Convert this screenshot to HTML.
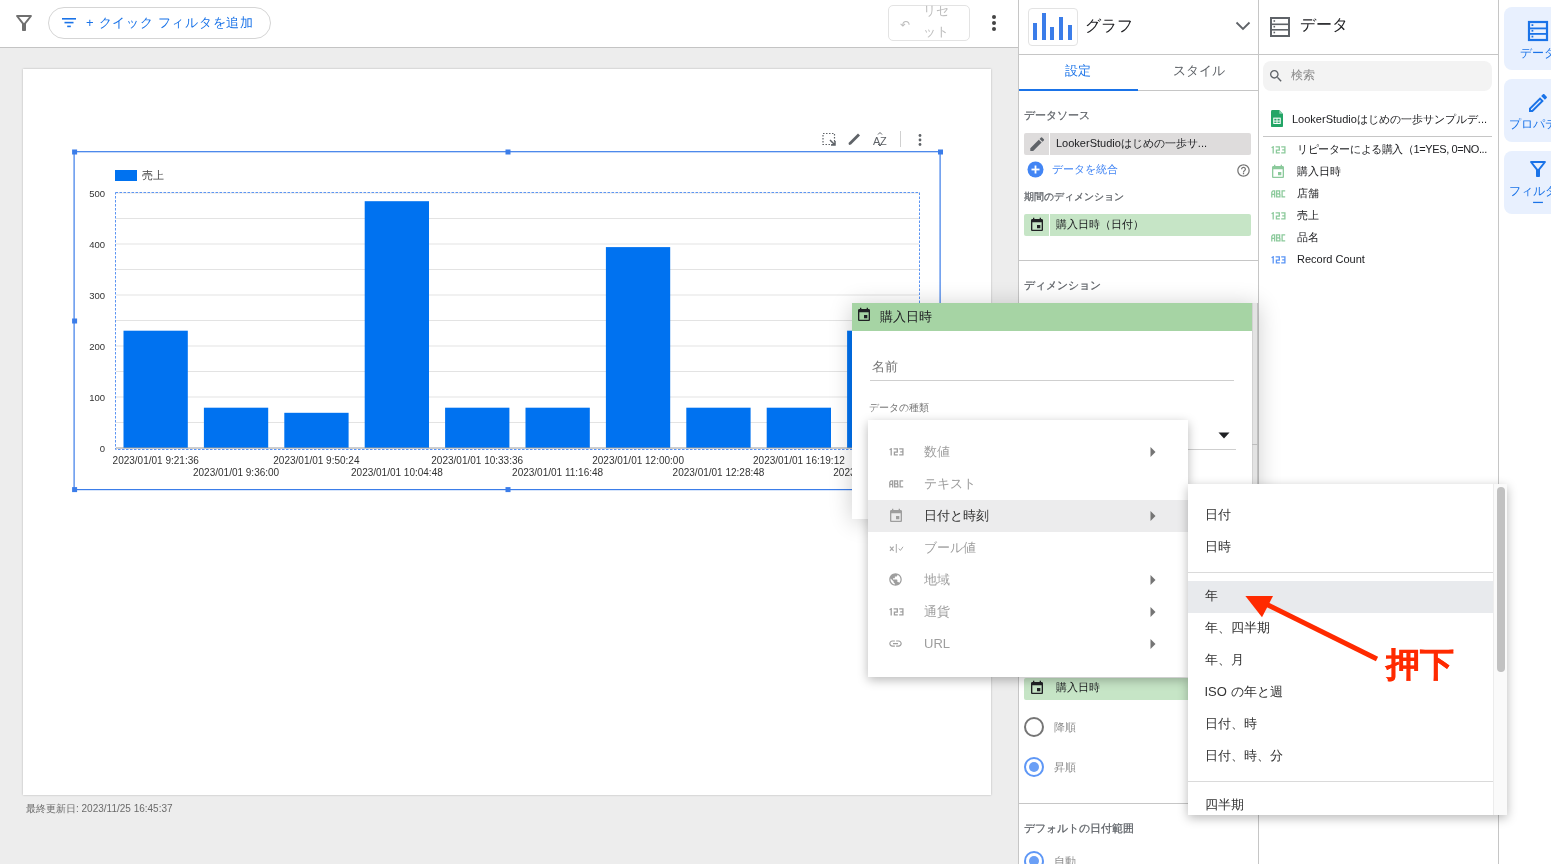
<!DOCTYPE html>
<html><head><meta charset="utf-8">
<style>
*{box-sizing:border-box;margin:0;padding:0}
html,body{width:1551px;height:864px;overflow:hidden;background:#fff;font-family:"Liberation Sans",sans-serif;color:#202124}
.a{position:absolute}
.t{position:absolute;white-space:nowrap;line-height:1}
</style></head><body><div style="position:absolute;left:0;top:0;width:1551px;height:864px;overflow:hidden;will-change:transform">
<div class="a" style="left:0px;top:0px;width:1018px;height:48px;background:#fff;border-bottom:1px solid #c4c4c4"></div>
<div class="a" style="left:0px;top:48px;width:1018px;height:816px;background:#ededed;"></div>
<svg class="a" style="left:12px;top:11px" width="24" height="24" viewBox="0 0 24 24"><path fill="#6f6f6f" d="M7,6h10l-5.01,6.3L7,6z M4.25,5.61C6.27,8.2,10,13,10,13v6c0,0.55,0.45,1,1,1h2c0.55,0,1-0.45,1-1v-6c0,0,3.72-4.8,5.74-7.39C20.25,4.95,19.78,4,18.95,4H5.04C4.21,4,3.74,4.95,4.25,5.61z"/></svg>
<div class="a" style="left:48px;top:7px;width:223px;height:32px;background:transparent;border:1px solid #d5d5d5;border-radius:16px"></div>
<svg class="a" style="left:62px;top:18px" width="14" height="10" viewBox="0 0 14 10"><rect x="0" y="0" width="14" height="1.6" fill="#1a73e8"/><rect x="2.5" y="3.8" width="9" height="1.6" fill="#1a73e8"/><rect x="5.2" y="7.6" width="3.6" height="1.6" fill="#1a73e8"/></svg>
<div class="t" style="left:86px;top:16px;font-size:13px;color:#1a73e8;letter-spacing:0.7px">+ クイック フィルタを追加</div>
<div class="a" style="left:888px;top:5px;width:82px;height:36px;background:transparent;border:1px solid #e3e3e3;border-radius:5px"></div>
<div class="t" style="left:900px;top:19px;font-size:12px;color:#bdbdbd;">&#x21B6;</div>
<div class="t" style="left:922.5px;top:0px;font-size:13px;color:#bdbdbd;line-height:21px;white-space:normal;width:28px">リセ ット</div>
<div class="a" style="left:992px;top:15px;width:4px;height:4px;background:#444;border-radius:2px"></div>
<div class="a" style="left:992px;top:21px;width:4px;height:4px;background:#444;border-radius:2px"></div>
<div class="a" style="left:992px;top:27px;width:4px;height:4px;background:#444;border-radius:2px"></div>
<div class="a" style="left:23px;top:69px;width:968px;height:726px;background:#fff;box-shadow:0 0 2px rgba(0,0,0,.25)"></div>
<svg class="a" style="left:0;top:0" width="1018" height="864" viewBox="0 0 1018 864">
<line x1="116" x2="919" y1="422.5" y2="422.5" stroke="#e3e3e3" stroke-width="1"/>
<line x1="116" x2="919" y1="397.0" y2="397.0" stroke="#e3e3e3" stroke-width="1"/>
<line x1="116" x2="919" y1="371.5" y2="371.5" stroke="#e3e3e3" stroke-width="1"/>
<line x1="116" x2="919" y1="346.0" y2="346.0" stroke="#e3e3e3" stroke-width="1"/>
<line x1="116" x2="919" y1="320.5" y2="320.5" stroke="#e3e3e3" stroke-width="1"/>
<line x1="116" x2="919" y1="295.0" y2="295.0" stroke="#e3e3e3" stroke-width="1"/>
<line x1="116" x2="919" y1="269.5" y2="269.5" stroke="#e3e3e3" stroke-width="1"/>
<line x1="116" x2="919" y1="244.0" y2="244.0" stroke="#e3e3e3" stroke-width="1"/>
<line x1="116" x2="919" y1="218.5" y2="218.5" stroke="#e3e3e3" stroke-width="1"/>
<line x1="116" x2="919" y1="193.0" y2="193.0" stroke="#e3e3e3" stroke-width="1"/>
<rect x="123.5" y="330.7" width="64.3" height="117.3" fill="#0072f0"/>
<rect x="203.9" y="407.7" width="64.3" height="40.3" fill="#0072f0"/>
<rect x="284.3" y="412.8" width="64.3" height="35.2" fill="#0072f0"/>
<rect x="364.7" y="201.2" width="64.3" height="246.8" fill="#0072f0"/>
<rect x="445.1" y="407.7" width="64.3" height="40.3" fill="#0072f0"/>
<rect x="525.5" y="407.7" width="64.3" height="40.3" fill="#0072f0"/>
<rect x="605.9" y="247.1" width="64.3" height="200.9" fill="#0072f0"/>
<rect x="686.3" y="407.7" width="64.3" height="40.3" fill="#0072f0"/>
<rect x="766.7" y="407.7" width="64.3" height="40.3" fill="#0072f0"/>
<rect x="847.1" y="330.7" width="64.3" height="117.3" fill="#0072f0"/>
<line x1="116" x2="919" y1="448.0" y2="448.0" stroke="#9a9a9a" stroke-width="1"/>
<rect x="115.5" y="192.5" width="804" height="257" fill="none" stroke="#5c95f2" stroke-width="1" stroke-dasharray="2.5,1.5"/>
<text x="105" y="451.5" text-anchor="end" font-size="9.5" fill="#333" font-family="Liberation Sans">0</text>
<text x="105" y="400.5" text-anchor="end" font-size="9.5" fill="#333" font-family="Liberation Sans">100</text>
<text x="105" y="349.5" text-anchor="end" font-size="9.5" fill="#333" font-family="Liberation Sans">200</text>
<text x="105" y="298.5" text-anchor="end" font-size="9.5" fill="#333" font-family="Liberation Sans">300</text>
<text x="105" y="247.5" text-anchor="end" font-size="9.5" fill="#333" font-family="Liberation Sans">400</text>
<text x="105" y="196.5" text-anchor="end" font-size="9.5" fill="#333" font-family="Liberation Sans">500</text>
<text x="155.7" y="464" text-anchor="middle" font-size="10" fill="#333" font-family="Liberation Sans">2023/01/01 9:21:36</text>
<text x="236.1" y="475.5" text-anchor="middle" font-size="10" fill="#333" font-family="Liberation Sans">2023/01/01 9:36:00</text>
<text x="316.4" y="464" text-anchor="middle" font-size="10" fill="#333" font-family="Liberation Sans">2023/01/01 9:50:24</text>
<text x="396.9" y="475.5" text-anchor="middle" font-size="10" fill="#333" font-family="Liberation Sans">2023/01/01 10:04:48</text>
<text x="477.2" y="464" text-anchor="middle" font-size="10" fill="#333" font-family="Liberation Sans">2023/01/01 10:33:36</text>
<text x="557.6" y="475.5" text-anchor="middle" font-size="10" fill="#333" font-family="Liberation Sans">2023/01/01 11:16:48</text>
<text x="638.1" y="464" text-anchor="middle" font-size="10" fill="#333" font-family="Liberation Sans">2023/01/01 12:00:00</text>
<text x="718.5" y="475.5" text-anchor="middle" font-size="10" fill="#333" font-family="Liberation Sans">2023/01/01 12:28:48</text>
<text x="798.9" y="464" text-anchor="middle" font-size="10" fill="#333" font-family="Liberation Sans">2023/01/01 16:19:12</text>
<text x="879.2" y="475.5" text-anchor="middle" font-size="10" fill="#333" font-family="Liberation Sans">2023/01/01 16:48:00</text>
<rect x="115" y="170" width="22" height="11" fill="#0072f0"/>
<text x="142" y="179" font-size="11" fill="#444" font-family="Liberation Sans">売上</text>
<rect x="74.1" y="151.7" width="866" height="337.9" fill="none" stroke="#3b7de9" stroke-width="1.2"/>
<rect x="72.1" y="149.5" width="5" height="5" fill="#3b7de9"/>
<rect x="505.5" y="149.5" width="5" height="5" fill="#3b7de9"/>
<rect x="938.0" y="149.5" width="5" height="5" fill="#3b7de9"/>
<rect x="72.1" y="318.5" width="5" height="5" fill="#3b7de9"/>
<rect x="938.0" y="318.5" width="5" height="5" fill="#3b7de9"/>
<rect x="72.1" y="487.1" width="5" height="5" fill="#3b7de9"/>
<rect x="505.5" y="487.1" width="5" height="5" fill="#3b7de9"/>
<rect x="938.0" y="487.1" width="5" height="5" fill="#3b7de9"/>
<g fill="none" stroke="#5f6368" stroke-width="1.2" stroke-dasharray="1.5,1.5"><rect x="823" y="133.5" width="11.5" height="11"/></g>
<path d="M830 140 l5 5 m-4 0 h4 v-4" fill="none" stroke="#5f6368" stroke-width="1.5"/>
<path d="M848.5 143 L849 145 L851 144.5 L860 135.5 L858 133.5 Z" fill="#5f6368"/>
<text x="873" y="145" font-size="11" fill="#5f6368" font-family="Liberation Sans">A</text><text x="880" y="145" font-size="11" fill="#5f6368" font-family="Liberation Sans">Z</text>
<path d="M878 134.5 l2-2 l2 2 M878 144 l2 2 l2-2" fill="none" stroke="#5f6368" stroke-width="1"/>
<line x1="900.5" x2="900.5" y1="131" y2="147" stroke="#d0d0d0" stroke-width="1"/>
<circle cx="920" cy="135.5" r="1.4" fill="#5f6368"/><circle cx="920" cy="140" r="1.4" fill="#5f6368"/><circle cx="920" cy="144.5" r="1.4" fill="#5f6368"/>
</svg>
<div class="t" style="left:26px;top:804px;font-size:10px;color:#6b6b6b;">最終更新日: 2023/11/25 16:45:37</div>
<div class="a" style="left:1018px;top:0px;width:241px;height:864px;background:#fff;border-left:1px solid #c6c6c6;border-right:1px solid #c6c6c6"></div>
<div class="a" style="left:1259px;top:0px;width:240px;height:864px;background:#fff;border-right:1px solid #c6c6c6"></div>
<div class="a" style="left:1028px;top:8px;width:50px;height:38px;background:transparent;border:1px solid #e3e3e3;border-radius:4px"></div>
<div class="a" style="left:1033.1px;top:22.5px;width:3.8px;height:17.8px;background:#3b7de9;"></div>
<div class="a" style="left:1042px;top:13.4px;width:3.8px;height:26.9px;background:#3b7de9;"></div>
<div class="a" style="left:1050.4px;top:26.9px;width:3.8px;height:13.4px;background:#3b7de9;"></div>
<div class="a" style="left:1059.4px;top:16.6px;width:3.8px;height:23.7px;background:#3b7de9;"></div>
<div class="a" style="left:1068.4px;top:25.3px;width:3.8px;height:15.0px;background:#3b7de9;"></div>
<div class="t" style="left:1085px;top:18px;font-size:16px;color:#202124;">グラフ</div>
<svg class="a" style="left:1234px;top:17px" width="18" height="18" viewBox="0 0 18 18"><path d="M2.5 5.5 L9 12 L15.5 5.5" fill="none" stroke="#5f6368" stroke-width="1.8"/></svg>
<div class="a" style="left:1019px;top:54px;width:239px;height:1px;background:#c6c6c6;"></div>
<div class="t" style="left:1065px;top:64px;font-size:13px;color:#1a73e8;">設定</div>
<div class="t" style="left:1173px;top:64px;font-size:13px;color:#5f6368;">スタイル</div>
<div class="a" style="left:1019px;top:90px;width:239px;height:1px;background:#c6c6c6;"></div>
<div class="a" style="left:1019px;top:89px;width:119px;height:2px;background:#1a73e8;"></div>
<div class="t" style="left:1024px;top:110px;font-size:11px;color:#5f6368;-webkit-text-stroke:0.25px #5f6368">データソース</div>
<div class="a" style="left:1024px;top:133px;width:227px;height:22px;background:#dedcdc;border-radius:2px"></div>
<div class="a" style="left:1049px;top:133px;width:1.2px;height:22px;background:#fff;"></div>
<svg class="a" style="left:1027.7px;top:134.6px" width="18.4" height="18.4" viewBox="0 0 24 24"><path fill="#5f6368" d="M3 17.25V21h3.75L17.81 9.94l-3.75-3.75L3 17.25zM20.71 7.04c.39-.39.39-1.02 0-1.41l-2.34-2.34a.9959.9959 0 0 0-1.41 0l-1.83 1.83 3.75 3.75 1.83-1.83z"/></svg>
<div class="t" style="left:1056px;top:138px;font-size:11px;color:#202124;">LookerStudioはじめの一歩サ...</div>
<svg class="a" style="left:1027px;top:161px" width="17" height="17" viewBox="0 0 17 17"><circle cx="8.5" cy="8.5" r="8" fill="#4285f4"/><rect x="4.5" y="7.6" width="8" height="1.8" fill="#fff"/><rect x="7.6" y="4.5" width="1.8" height="8" fill="#fff"/></svg>
<div class="t" style="left:1052px;top:164px;font-size:11px;color:#4285f4;">データを統合</div>
<svg class="a" style="left:1236px;top:163px" width="15" height="15" viewBox="0 0 24 24"><path fill="#757575" d="M11 18h2v-2h-2v2zm1-16C6.48 2 2 6.48 2 12s4.48 10 10 10 10-4.48 10-10S17.52 2 12 2zm0 18c-4.41 0-8-3.59-8-8s3.59-8 8-8 8 3.59 8 8-3.59 8-8 8zm0-14c-2.21 0-4 1.790-4 4h2c0-1.1.9-2 2-2s2 .9 2 2c0 2-3 1.75-3 5h2c0-2.25 3-2.5 3-5 0-2.21-1.79-4-4-4z"/></svg>
<div class="t" style="left:1024px;top:192px;font-size:10px;color:#5f6368;-webkit-text-stroke:0.25px #5f6368">期間のディメンション</div>
<div class="a" style="left:1024px;top:214px;width:227px;height:22px;background:#c6e5c6;border-radius:2px"></div>
<div class="a" style="left:1049px;top:214px;width:1.2px;height:22px;background:#fff;"></div>
<svg class="a" style="left:1029px;top:217px" width="16" height="16" viewBox="0 0 24 24"><path fill="#202124" d="M17 12h-5v5h5v-5zM16 1v2H8V1H6v2H5c-1.11 0-1.99.9-1.99 2L3 19c0 1.1.89 2 2 2h14c1.1 0 2-.9 2-2V5c0-1.1-.9-2-2-2h-1V1h-2zm3 18H5V8h14v11z"/></svg>
<div class="t" style="left:1056px;top:219px;font-size:11px;color:#202124;">購入日時（日付）</div>
<div class="a" style="left:1019px;top:260px;width:239px;height:1px;background:#c6c6c6;"></div>
<div class="t" style="left:1024px;top:280px;font-size:11px;color:#5f6368;-webkit-text-stroke:0.25px #5f6368">ディメンション</div>
<svg class="a" style="left:1269px;top:16px" width="22" height="22" viewBox="0 0 22 22"><rect x="2" y="2" width="18" height="18" fill="none" stroke="#5f6368" stroke-width="2"/><rect x="2" y="7.5" width="18" height="1.6" fill="#5f6368"/><rect x="2" y="13" width="18" height="1.6" fill="#5f6368"/><rect x="4.5" y="4.2" width="1.6" height="1.6" fill="#5f6368"/><rect x="4.5" y="9.9" width="1.6" height="1.6" fill="#5f6368"/><rect x="4.5" y="15.7" width="1.6" height="1.6" fill="#5f6368"/></svg>
<div class="t" style="left:1300px;top:17px;font-size:16px;color:#202124;">データ</div>
<div class="a" style="left:1259px;top:54px;width:239px;height:1px;background:#c6c6c6;"></div>
<div class="a" style="left:1263px;top:61px;width:229px;height:30px;background:#f3f3f3;border-radius:8px"></div>
<svg class="a" style="left:1268px;top:68px" width="16" height="16" viewBox="0 0 24 24"><path fill="#5f6368" d="M15.5 14h-.79l-.28-.27C15.41 12.59 16 11.11 16 9.5 16 5.910 13.09 3 9.5 3S3 5.91 3 9.5 5.91 16 9.5 16c1.61 0 3.09-.59 4.23-1.57l.27.28v.79l5 4.99L20.49 19l-4.99-5zm-6 0C7.01 14 5 11.99 5 9.5S7.01 5 9.5 5 14 7.01 14 9.5 11.99 14 9.5 14z"/></svg>
<div class="t" style="left:1291px;top:69px;font-size:12px;color:#8a8a8a;">検索</div>
<svg class="a" style="left:1271px;top:109.5px" width="12" height="17.3" viewBox="0 0 13 18" preserveAspectRatio="none"><path d="M0 1.5 Q0 0 1.5 0 L9 0 L13 4 L13 16.5 Q13 18 11.5 18 L1.5 18 Q0 18 0 16.5Z" fill="#23a566"/><path d="M9 0 L13 4 L9 4Z" fill="#8ed1b1"/><rect x="3" y="8.5" width="7" height="5.5" fill="none" stroke="#fff" stroke-width="1.1"/><rect x="3" y="11" width="7" height="1" fill="#fff"/><rect x="6" y="8.5" width="1" height="5.5" fill="#fff"/></svg>
<div class="t" style="left:1292px;top:114px;font-size:11px;color:#202124;">LookerStudioはじめの一歩サンプルデ...</div>
<div class="a" style="left:1263px;top:136px;width:229px;height:1px;background:#c6c6c6;"></div>
<svg class="a" style="left:1271px;top:146px" width="15" height="8" viewBox="0 0 15 8"><path d="M0.6 1.8 L2.2 0.8 V7.6 M4.6 0.8 H8.3 V4.2 H5.4 V6.8 H8.8 M10.2 0.8 H13.9 V6.8 H10.2 M11.2 3.8 H13.9" fill="none" stroke="#8cca9c" stroke-width="1.3"/></svg>
<div class="t" style="left:1297px;top:144px;font-size:11px;color:#202124;letter-spacing:-0.4px">リピーターによる購入（1=YES, 0=NO...</div>
<svg class="a" style="left:1270px;top:164px" width="16" height="16" viewBox="0 0 24 24"><path fill="#8cca9c" d="M17 12h-5v5h5v-5zM16 1v2H8V1H6v2H5c-1.11 0-1.99.9-1.99 2L3 19c0 1.1.89 2 2 2h14c1.1 0 2-.9 2-2V5c0-1.1-.9-2-2-2h-1V1h-2zm3 18H5V8h14v11z"/></svg>
<div class="t" style="left:1297px;top:166px;font-size:11px;color:#202124;">購入日時</div>
<svg class="a" style="left:1271px;top:190px" width="15" height="8" viewBox="0 0 15 8"><path d="M0.8 7.6 V2.2 L2 0.8 H3.6 V7.6 M0.8 4.3 H3.6 M5.6 7.6 V0.8 H8.6 V3.4 L8 4 L8.9 4.6 V6.8 H5.6 M5.6 3.9 H8.2 M14.2 0.8 H11.1 V6.8 H14.2" fill="none" stroke="#8cca9c" stroke-width="1.3"/></svg>
<div class="t" style="left:1297px;top:188px;font-size:11px;color:#202124;">店舗</div>
<svg class="a" style="left:1271px;top:212px" width="15" height="8" viewBox="0 0 15 8"><path d="M0.6 1.8 L2.2 0.8 V7.6 M4.6 0.8 H8.3 V4.2 H5.4 V6.8 H8.8 M10.2 0.8 H13.9 V6.8 H10.2 M11.2 3.8 H13.9" fill="none" stroke="#8cca9c" stroke-width="1.3"/></svg>
<div class="t" style="left:1297px;top:210px;font-size:11px;color:#202124;">売上</div>
<svg class="a" style="left:1271px;top:234px" width="15" height="8" viewBox="0 0 15 8"><path d="M0.8 7.6 V2.2 L2 0.8 H3.6 V7.6 M0.8 4.3 H3.6 M5.6 7.6 V0.8 H8.6 V3.4 L8 4 L8.9 4.6 V6.8 H5.6 M5.6 3.9 H8.2 M14.2 0.8 H11.1 V6.8 H14.2" fill="none" stroke="#8cca9c" stroke-width="1.3"/></svg>
<div class="t" style="left:1297px;top:232px;font-size:11px;color:#202124;">品名</div>
<svg class="a" style="left:1271px;top:256px" width="15" height="8" viewBox="0 0 15 8"><path d="M0.6 1.8 L2.2 0.8 V7.6 M4.6 0.8 H8.3 V4.2 H5.4 V6.8 H8.8 M10.2 0.8 H13.9 V6.8 H10.2 M11.2 3.8 H13.9" fill="none" stroke="#5b95f5" stroke-width="1.3"/></svg>
<div class="t" style="left:1297px;top:254px;font-size:11px;color:#202124;">Record Count</div>
<div class="a" style="left:1499px;top:0px;width:52px;height:864px;background:#fff;"></div>
<div class="a" style="left:1504px;top:7px;width:60px;height:63px;background:#e8f0fe;border-radius:8px"></div>
<div class="a" style="left:1504px;top:79px;width:60px;height:63px;background:#e8f0fe;border-radius:8px"></div>
<div class="a" style="left:1504px;top:151px;width:60px;height:63px;background:#e8f0fe;border-radius:8px"></div>
<svg class="a" style="left:1527px;top:20px" width="22" height="22" viewBox="0 0 22 22"><rect x="2" y="2" width="18" height="18" fill="none" stroke="#1a73e8" stroke-width="2.2"/><rect x="2" y="7.5" width="18" height="1.8" fill="#1a73e8"/><rect x="2" y="13" width="18" height="1.8" fill="#1a73e8"/><rect x="4.5" y="4.2" width="1.8" height="1.8" fill="#1a73e8"/><rect x="4.5" y="9.9" width="1.8" height="1.8" fill="#1a73e8"/><rect x="4.5" y="15.7" width="1.8" height="1.8" fill="#1a73e8"/></svg>
<div class="t" style="left:1520px;top:47px;font-size:12px;color:#1a73e8;">データ</div>
<svg class="a" style="left:1526px;top:91px" width="24" height="24" viewBox="0 0 24 24"><path fill="#1a73e8" d="M14.06 9.02l.92.92L5.92 19H5v-.92l9.06-9.06M17.66 3c-.25 0-.51.1-.7.29l-1.830 1.83 3.75 3.75 1.83-1.83c.39-.39.39-1.02 0-1.41l-2.34-2.34c-.2-.2-.45-.29-.71-.29zm-3.6 3.19L3 17.250V21h3.75L17.81 9.94l-3.75-3.75z"/></svg>
<div class="t" style="left:1509px;top:118px;font-size:12px;color:#1a73e8;">プロパティ</div>
<svg class="a" style="left:1526px;top:157px" width="24" height="24" viewBox="0 0 24 24"><path fill="#1a73e8" d="M7,6h10l-5.01,6.3L7,6z M4.25,5.61C6.27,8.2,10,13,10,13v6c0,0.55,0.45,1,1,1h2c0.55,0,1-0.45,1-1v-6c0,0,3.72-4.8,5.74-7.39C20.25,4.95,19.78,4,18.95,4H5.04C4.21,4,3.74,4.95,4.25,5.61z"/></svg>
<div class="t" style="left:1509px;top:185px;font-size:12px;color:#1a73e8;">フィルタ</div>
<div class="t" style="left:1532px;top:197px;font-size:12px;color:#1a73e8;">ー</div>
<div class="a" style="left:1024px;top:678px;width:227px;height:22px;background:#c6e5c6;border-radius:2px"></div>
<svg class="a" style="left:1029px;top:680px" width="16" height="16" viewBox="0 0 24 24"><path fill="#202124" d="M17 12h-5v5h5v-5zM16 1v2H8V1H6v2H5c-1.11 0-1.99.9-1.99 2L3 19c0 1.1.89 2 2 2h14c1.1 0 2-.9 2-2V5c0-1.1-.9-2-2-2h-1V1h-2zm3 18H5V8h14v11z"/></svg>
<div class="t" style="left:1056px;top:682px;font-size:11px;color:#202124;">購入日時</div>
<div class="a" style="left:1024px;top:717px;width:20px;height:20px;background:transparent;border:2px solid #757575;border-radius:50%"></div>
<div class="t" style="left:1054px;top:722px;font-size:11px;color:#8a8a8a;">降順</div>
<div class="a" style="left:1024px;top:757px;width:20px;height:20px;background:transparent;border:2px solid #5e97f6;border-radius:50%"></div>
<div class="a" style="left:1029px;top:762px;width:10px;height:10px;background:#6a9ff6;border-radius:50%"></div>
<div class="t" style="left:1054px;top:762px;font-size:11px;color:#8a8a8a;">昇順</div>
<div class="a" style="left:1019px;top:803px;width:239px;height:1px;background:#c6c6c6;"></div>
<div class="t" style="left:1024px;top:823px;font-size:11px;color:#5f6368;-webkit-text-stroke:0.25px #5f6368">デフォルトの日付範囲</div>
<div class="a" style="left:1024px;top:851px;width:20px;height:20px;background:transparent;border:2px solid #5e97f6;border-radius:50%"></div>
<div class="a" style="left:1029px;top:856px;width:10px;height:10px;background:#6a9ff6;border-radius:50%"></div>
<div class="t" style="left:1054px;top:856px;font-size:11px;color:#8a8a8a;">自動</div>
<div class="a" style="left:852px;top:303px;width:406px;height:216px;background:#fff;box-shadow:0 2px 22px rgba(0,0,0,.2)"></div>
<div class="a" style="left:1252px;top:303px;width:6px;height:216px;background:#e3e3e3;border-left:1px solid #d2d2d2;border-right:1px solid #c0c0c0"></div>
<div class="a" style="left:1252px;top:444px;width:6px;height:1px;background:#bdbdbd;"></div>
<div class="a" style="left:852px;top:303px;width:400px;height:28px;background:#a6d4a4;"></div>
<svg class="a" style="left:856px;top:307px" width="16" height="16" viewBox="0 0 24 24"><path fill="#202124" d="M17 12h-5v5h5v-5zM16 1v2H8V1H6v2H5c-1.11 0-1.99.9-1.99 2L3 19c0 1.1.89 2 2 2h14c1.1 0 2-.9 2-2V5c0-1.1-.9-2-2-2h-1V1h-2zm3 18H5V8h14v11z"/></svg>
<div class="t" style="left:880px;top:310px;font-size:13px;color:#202124;">購入日時</div>
<div class="t" style="left:872px;top:360px;font-size:13px;color:#757575;">名前</div>
<div class="a" style="left:870px;top:380px;width:364px;height:1px;background:#cfcfcf;"></div>
<div class="t" style="left:869px;top:403px;font-size:10px;color:#757575;">データの種類</div>
<svg class="a" style="left:1218px;top:432px" width="12" height="7" viewBox="0 0 12 7"><path d="M0.5 0.5 L11.5 0.5 L6 6.5Z" fill="#202124"/></svg>
<div class="a" style="left:870px;top:449px;width:366px;height:1px;background:#cfcfcf;"></div>
<div class="a" style="left:868px;top:420px;width:320px;height:257px;background:#fff;box-shadow:0 3px 10px rgba(0,0,0,.28)"></div>
<div class="a" style="left:868px;top:500px;width:320px;height:32px;background:#ececed;"></div>
<svg class="a" style="left:889px;top:448px" width="15" height="8" viewBox="0 0 15 8"><path d="M0.6 1.8 L2.2 0.8 V7.6 M4.6 0.8 H8.3 V4.2 H5.4 V6.8 H8.8 M10.2 0.8 H13.9 V6.8 H10.2 M11.2 3.8 H13.9" fill="none" stroke="#9e9e9e" stroke-width="1.3"/></svg>
<div class="t" style="left:924px;top:445px;font-size:13px;color:#9e9e9e;">数値</div>
<svg class="a" style="left:1150px;top:447px" width="6" height="10" viewBox="0 0 6 10"><path d="M0.5 0 L5.5 5 L0.5 10Z" fill="#757575"/></svg>
<svg class="a" style="left:889px;top:480px" width="15" height="8" viewBox="0 0 15 8"><path d="M0.8 7.6 V2.2 L2 0.8 H3.6 V7.6 M0.8 4.3 H3.6 M5.6 7.6 V0.8 H8.6 V3.4 L8 4 L8.9 4.6 V6.8 H5.6 M5.6 3.9 H8.2 M14.2 0.8 H11.1 V6.8 H14.2" fill="none" stroke="#9e9e9e" stroke-width="1.3"/></svg>
<div class="t" style="left:924px;top:477px;font-size:13px;color:#9e9e9e;">テキスト</div>
<svg class="a" style="left:888px;top:508px" width="16" height="16" viewBox="0 0 24 24"><path fill="#9e9e9e" d="M17 12h-5v5h5v-5zM16 1v2H8V1H6v2H5c-1.11 0-1.99.9-1.99 2L3 19c0 1.1.89 2 2 2h14c1.1 0 2-.9 2-2V5c0-1.1-.9-2-2-2h-1V1h-2zm3 18H5V8h14v11z"/></svg>
<div class="t" style="left:924px;top:509px;font-size:13px;color:#333;">日付と時刻</div>
<svg class="a" style="left:1150px;top:511px" width="6" height="10" viewBox="0 0 6 10"><path d="M0.5 0 L5.5 5 L0.5 10Z" fill="#757575"/></svg>
<svg class="a" style="left:889px;top:543px" width="15" height="11" viewBox="0 0 15 11"><path d="M1 3.6 L4.6 7.8 M4.6 3.6 L1 7.8" stroke="#a8a8a8" stroke-width="1.2" fill="none"/><path d="M7.3 1 V9.8" stroke="#a8a8a8" stroke-width="1"/><path d="M9.8 5.6 L11.4 7.4 L14 3.8" stroke="#a8a8a8" stroke-width="1" fill="none"/></svg>
<div class="t" style="left:924px;top:541px;font-size:13px;color:#9e9e9e;">ブール値</div>
<svg class="a" style="left:888px;top:572px" width="15" height="15" viewBox="0 0 24 24"><path fill="#9e9e9e" d="M12 2C6.48 2 2 6.48 2 12s4.48 10 10 10 10-4.48 10-10S17.52 2 12 2zm-1 17.93c-3.95-.49-7-3.85-7-7.93 0-.62.08-1.21.21-1.79L9 15v1c0 1.1.9 2 2 2v1.93zm6.9-2.54c-.26-.81-1-1.39-1.9-1.39h-1v-3c0-.55-.45-1-1-1H8v-2h2c.55 0 1-.45 1-1V7h2c1.1 0 2-.9 2-2v-.41c2.93 1.19 5 4.06 5 7.41 0 2.08-.8 3.97-2.1 5.39z"/></svg>
<div class="t" style="left:924px;top:573px;font-size:13px;color:#9e9e9e;">地域</div>
<svg class="a" style="left:1150px;top:575px" width="6" height="10" viewBox="0 0 6 10"><path d="M0.5 0 L5.5 5 L0.5 10Z" fill="#757575"/></svg>
<svg class="a" style="left:889px;top:608px" width="15" height="8" viewBox="0 0 15 8"><path d="M0.6 1.8 L2.2 0.8 V7.6 M4.6 0.8 H8.3 V4.2 H5.4 V6.8 H8.8 M10.2 0.8 H13.9 V6.8 H10.2 M11.2 3.8 H13.9" fill="none" stroke="#9e9e9e" stroke-width="1.3"/></svg>
<div class="t" style="left:924px;top:605px;font-size:13px;color:#9e9e9e;">通貨</div>
<svg class="a" style="left:1150px;top:607px" width="6" height="10" viewBox="0 0 6 10"><path d="M0.5 0 L5.5 5 L0.5 10Z" fill="#757575"/></svg>
<svg class="a" style="left:888px;top:636px" width="15" height="15" viewBox="0 0 24 24"><path fill="#9e9e9e" d="M3.9 12c0-1.71 1.39-3.1 3.1-3.1h4V7H7c-2.76 0-5 2.24-5 5s2.24 5 5 5h4v-1.9H7c-1.71 0-3.1-1.39-3.1-3.1zM8 13h8v-2H8v2zm9-6h-4v1.9h4c1.71 0 3.1 1.39 3.1 3.1s-1.39 3.1-3.1 3.1h-4V17h4c2.76 0 5-2.24 5-5s-2.24-5-5-5z"/></svg>
<div class="t" style="left:924px;top:637px;font-size:13px;color:#9e9e9e;">URL</div>
<svg class="a" style="left:1150px;top:639px" width="6" height="10" viewBox="0 0 6 10"><path d="M0.5 0 L5.5 5 L0.5 10Z" fill="#757575"/></svg>
<div class="a" style="left:1188px;top:484px;width:319px;height:331px;background:#fff;box-shadow:0 3px 10px rgba(0,0,0,.28)"></div>
<div class="a" style="left:1188px;top:581px;width:305px;height:32px;background:#e8eaed;"></div>
<div class="t" style="left:1204.5px;top:508px;font-size:13px;color:#333;">日付</div>
<div class="t" style="left:1204.5px;top:540px;font-size:13px;color:#333;">日時</div>
<div class="t" style="left:1204.5px;top:589px;font-size:13px;color:#333;">年</div>
<div class="t" style="left:1204.5px;top:621px;font-size:13px;color:#333;">年、四半期</div>
<div class="t" style="left:1204.5px;top:653px;font-size:13px;color:#333;">年、月</div>
<div class="t" style="left:1204.5px;top:685px;font-size:13px;color:#333;">ISO の年と週</div>
<div class="t" style="left:1204.5px;top:717px;font-size:13px;color:#333;">日付、時</div>
<div class="t" style="left:1204.5px;top:749px;font-size:13px;color:#333;">日付、時、分</div>
<div class="t" style="left:1204.5px;top:798px;font-size:13px;color:#333;">四半期</div>
<div class="a" style="left:1188px;top:572px;width:305px;height:1px;background:#dadada;"></div>
<div class="a" style="left:1188px;top:781px;width:305px;height:1px;background:#dadada;"></div>
<div class="a" style="left:1493px;top:484px;width:14px;height:331px;background:#fafafa;border-left:1px solid #ececec"></div>
<div class="a" style="left:1497px;top:487px;width:8px;height:185px;background:#c1c1c1;border-radius:4px"></div>
<svg class="a" style="left:0;top:0" width="1551" height="864" viewBox="0 0 1551 864">
<line x1="1377" y1="659" x2="1266" y2="604" stroke="#ff2a00" stroke-width="5"/>
<path d="M1245.4 596 L1273 596 L1262 617.3 Z" fill="#ff2a00"/>
</svg>
<div class="t" style="left:1385.5px;top:647px;font-size:34px;color:#ff2a00;font-weight:bold;-webkit-text-stroke:0.4px #ff2a00">押下</div>
</div></body></html>
